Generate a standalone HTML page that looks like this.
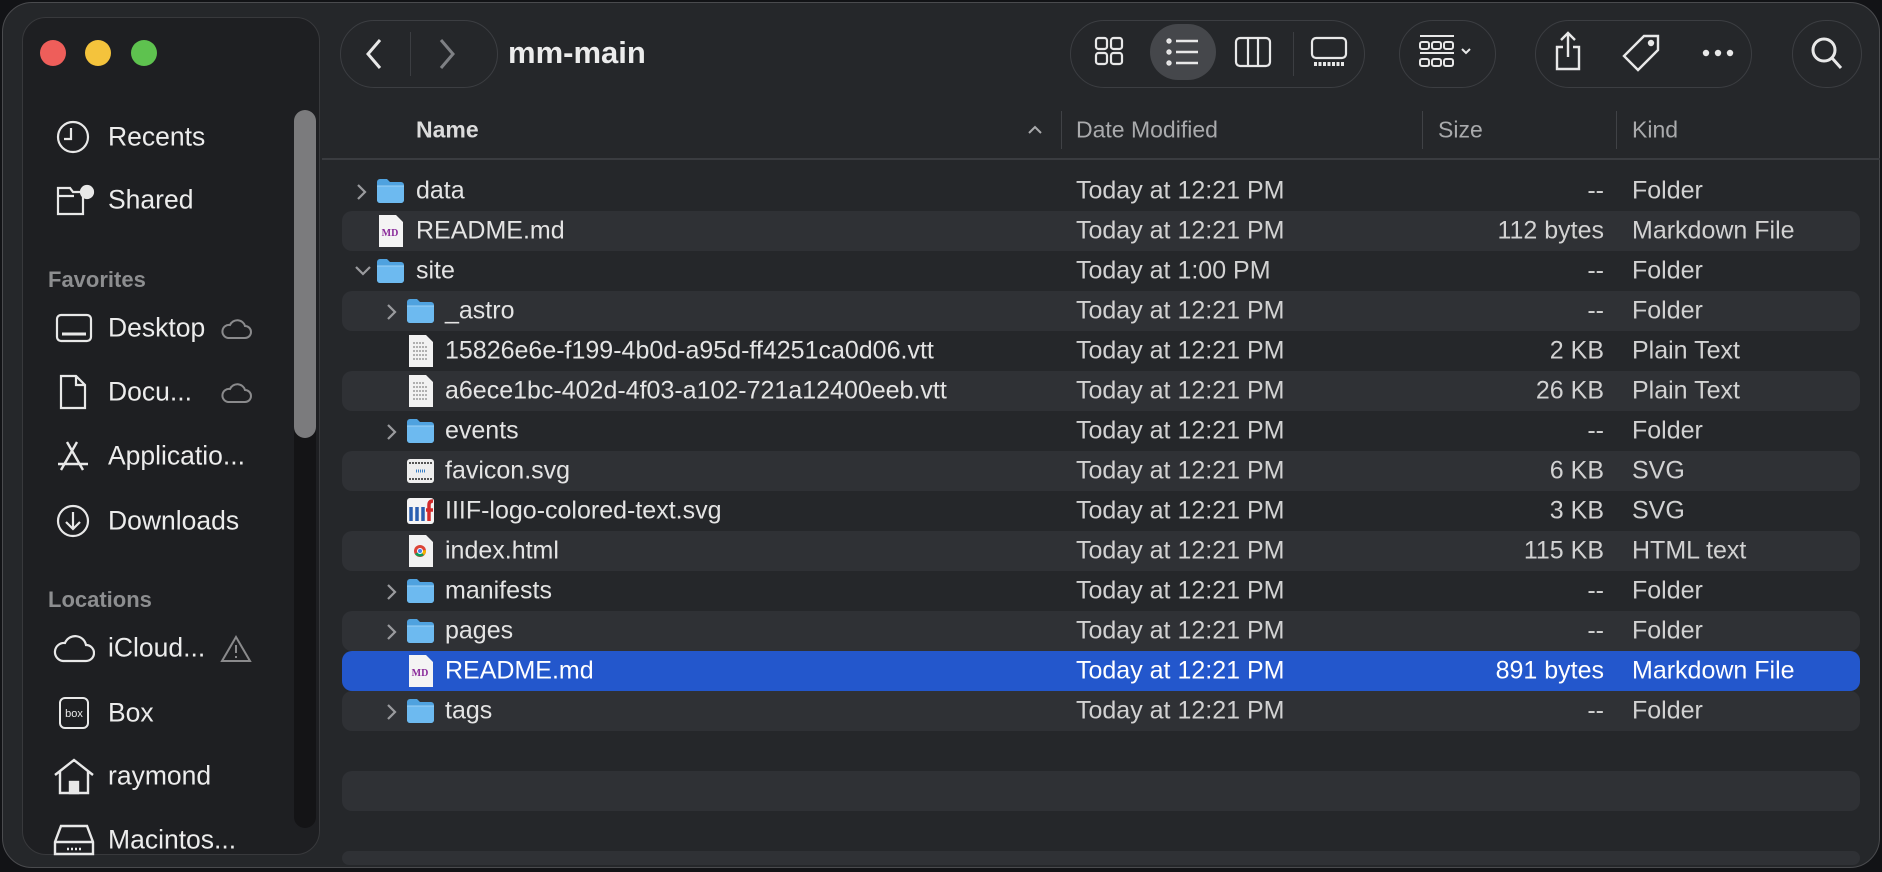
<!DOCTYPE html>
<html><head><meta charset="utf-8"><style>
*{margin:0;padding:0;box-sizing:border-box}
body{width:1882px;height:872px;background:#121316;font-family:"Liberation Sans",sans-serif;overflow:hidden;position:relative;color:#e2e2e2}
.win{position:absolute;left:2px;top:2px;width:1878px;height:866px;border-radius:30px;background:#25272a;border:1.5px solid #4a4b4e}
.side{position:absolute;left:22px;top:17px;width:298px;height:838px;border-radius:24px;background:#1e1f22;border:1px solid #38393c}
.tl{position:absolute;top:40px;width:26px;height:26px;border-radius:50%}
.abs{position:absolute}
.si{position:absolute;left:108px;font-size:26.5px;color:#ececec;transform:translateY(-50%);white-space:nowrap}
.lbl{position:absolute;left:48px;font-size:22px;font-weight:bold;color:#8d8e90;transform:translateY(-50%)}
.ico{position:absolute;left:55px;transform:translateY(-50%)}
.pill{position:absolute;border:1.5px solid #3c3e42;border-radius:34px;background:#25272a}
.hdr{position:absolute;top:130px;font-size:23px;color:#a9aaac;transform:translateY(-50%)}
.sep{position:absolute;top:111px;width:1px;height:38px;background:#404246}
.row{position:absolute;left:342px;width:1518px;height:40px;border-radius:10px}
.row.s{background:#2f3135}
.row.sel{background:#2357cc}
.t{position:absolute;top:50%;transform:translateY(-50%);font-size:25px;color:#e4e4e4;white-space:nowrap}
.d{left:734px;color:#d2d2d2}
.z{right:256px;color:#d2d2d2}
.k{left:1290px;color:#d2d2d2}
.ch{position:absolute;top:12px}
</style></head><body>
<div class="win"></div>
<div class="side"></div>
<div class="tl" style="left:40px;background:#ee5e5a"></div>
<div class="tl" style="left:85px;background:#f4c33c"></div>
<div class="tl" style="left:131px;background:#5ec24f"></div>
<div class="abs" style="left:294px;top:110px;width:22px;height:718px;border-radius:11px;background:#141416"></div>
<div class="abs" style="left:294px;top:110px;width:22px;height:328px;border-radius:11px;background:#7b7b7d"></div>

<svg class="ico" style="top:137px" width="36" height="36" viewBox="0 0 36 36" fill="none" stroke="#e8e8e8" stroke-width="2.2"><circle cx="18" cy="18" r="15"/><path d="M16 9v11h-7"/></svg>
<div class="si" style="top:137px">Recents</div>
<svg class="ico" style="top:200px" width="40" height="36" viewBox="0 0 40 36" fill="none" stroke="#e8e8e8" stroke-width="2.2"><path d="M3 6h12l3 4h10v22H3z M3 14h16"/><circle cx="32" cy="10" r="6" fill="#e8e8e8"/></svg>
<div class="si" style="top:200px">Shared</div>
<div class="lbl" style="top:280px">Favorites</div>
<svg class="ico" style="top:328px" width="38" height="32" viewBox="0 0 38 32" fill="none" stroke="#e8e8e8" stroke-width="2.2"><rect x="2" y="3" width="34" height="26" rx="4"/><path d="M7 22h24" stroke-width="3"/></svg>
<div class="si" style="top:328px">Desktop</div>
<svg class="abs" style="left:220px;top:318px" width="32" height="22" viewBox="0 0 32 22" fill="none" stroke="#8a8a8c" stroke-width="2"><path d="M8 20h17a6 6 0 0 0 0-12 8 8 0 0 0-15-1 6 6 0 0 0-2 13z"/></svg>
<svg class="ico" style="top:392px;left:58px" width="30" height="38" viewBox="0 0 30 38" fill="none" stroke="#e8e8e8" stroke-width="2.2"><path d="M3 3h15l9 9v23H3z M18 3v9h9"/></svg>
<div class="si" style="top:392px">Docu...</div>
<svg class="abs" style="left:220px;top:382px" width="32" height="22" viewBox="0 0 32 22" fill="none" stroke="#8a8a8c" stroke-width="2"><path d="M8 20h17a6 6 0 0 0 0-12 8 8 0 0 0-15-1 6 6 0 0 0-2 13z"/></svg>
<svg class="ico" style="top:456px" width="36" height="36" viewBox="0 0 36 36" fill="none" stroke="#e8e8e8" stroke-width="2.4"><path d="M12 4l16 28M22 4L6 32M3 26h30"/></svg>
<div class="si" style="top:456px">Applicatio...</div>
<svg class="ico" style="top:521px" width="36" height="36" viewBox="0 0 36 36" fill="none" stroke="#e8e8e8" stroke-width="2.2"><circle cx="18" cy="18" r="15"/><path d="M18 9v17M11 19l7 7 7-7"/></svg>
<div class="si" style="top:521px">Downloads</div>
<div class="lbl" style="top:600px">Locations</div>
<svg class="ico" style="top:648px;left:53px" width="42" height="30" viewBox="0 0 42 30" fill="none" stroke="#e8e8e8" stroke-width="2.2"><path d="M10 28h23a8 8 0 0 0 0-16 11 11 0 0 0-21-2 9 9 0 0 0-2 18z"/></svg>
<div class="si" style="top:648px">iCloud...</div>
<svg class="abs" style="left:220px;top:634px" width="32" height="30" viewBox="0 0 32 30" fill="none" stroke="#8a8a8c" stroke-width="2"><path d="M16 3L30 27H2z M16 11v8 M16 22v2"/></svg>
<svg class="ico" style="top:713px;left:58px" width="32" height="34" viewBox="0 0 32 34" fill="none" stroke="#e8e8e8" stroke-width="2"><rect x="2" y="2" width="28" height="30" rx="5"/><text x="16" y="21" font-size="11" text-anchor="middle" fill="#e8e8e8" stroke="none" font-family="Liberation Sans">box</text></svg>
<div class="si" style="top:713px">Box</div>
<svg class="ico" style="top:776px;left:53px" width="42" height="38" viewBox="0 0 42 38" fill="none" stroke="#e8e8e8" stroke-width="2.4"><path d="M2 18L21 3l19 15M7 14v22h28V14"/><rect x="17" y="25" width="8" height="11" fill="#e8e8e8"/></svg>
<div class="si" style="top:776px">raymond</div>
<svg class="ico" style="top:840px;left:53px" width="42" height="36" viewBox="0 0 42 36" fill="none" stroke="#e8e8e8" stroke-width="2.4"><path d="M8 4h26l6 16v12H2V20z M2 20h38"/><path d="M14 27h14" stroke-dasharray="2 2"/></svg>
<div class="si" style="top:840px">Macintos...</div>

<div class="pill" style="left:340px;top:20px;width:158px;height:68px"></div>
<svg class="abs" style="left:362px;top:36px" width="24" height="36" viewBox="0 0 24 36" fill="none" stroke="#e8e8e8" stroke-width="3"><path d="M18 4L6 18l12 14"/></svg>
<div class="abs" style="left:410px;top:32px;width:1px;height:44px;background:#3c3e42"></div>
<svg class="abs" style="left:435px;top:36px" width="24" height="36" viewBox="0 0 24 36" fill="none" stroke="#7e8084" stroke-width="3"><path d="M6 4l12 14L6 32"/></svg>
<div class="abs" style="left:508px;top:35px;font-size:31px;font-weight:bold;color:#ececec">mm-main</div>

<div class="pill" style="left:1070px;top:20px;width:295px;height:68px"></div>
<div class="abs" style="left:1150px;top:24px;width:66px;height:56px;border-radius:28px;background:#45474b"></div>
<svg class="abs" style="left:1094px;top:36px" width="30" height="30" viewBox="0 0 30 30" fill="none" stroke="#e8e8e8" stroke-width="2.2"><rect x="2" y="2" width="11" height="11" rx="2.5"/><rect x="17" y="2" width="11" height="11" rx="2.5"/><rect x="2" y="17" width="11" height="11" rx="2.5"/><rect x="17" y="17" width="11" height="11" rx="2.5"/></svg>
<svg class="abs" style="left:1166px;top:38px" width="34" height="28" viewBox="0 0 34 28" fill="none" stroke="#e8e8e8" stroke-width="2.4"><path d="M10 3h22M10 14h22M10 25h22"/><circle cx="3" cy="3" r="1.5"/><circle cx="3" cy="14" r="1.5"/><circle cx="3" cy="25" r="1.5"/></svg>
<svg class="abs" style="left:1234px;top:36px" width="38" height="32" viewBox="0 0 38 32" fill="none" stroke="#e8e8e8" stroke-width="2.2"><rect x="2" y="2" width="34" height="28" rx="4"/><path d="M14 2v28M24 2v28"/></svg>
<div class="abs" style="left:1293px;top:32px;width:1px;height:44px;background:#3c3e42"></div>
<svg class="abs" style="left:1310px;top:36px" width="38" height="32" viewBox="0 0 38 32" fill="none" stroke="#e8e8e8" stroke-width="2.2"><rect x="2" y="2" width="34" height="20" rx="4"/><path d="M4 28h30" stroke-width="4" stroke-dasharray="3 1.5"/></svg>

<div class="pill" style="left:1399px;top:20px;width:97px;height:68px"></div>
<svg class="abs" style="left:1418px;top:34px" width="62" height="36" viewBox="0 0 62 36" fill="none" stroke="#e8e8e8" stroke-width="2"><path d="M2 2h34M2 19h34"/><rect x="2" y="8" width="9" height="7" rx="2"/><rect x="14" y="8" width="9" height="7" rx="2"/><rect x="26" y="8" width="9" height="7" rx="2"/><rect x="2" y="25" width="9" height="7" rx="2"/><rect x="14" y="25" width="9" height="7" rx="2"/><rect x="26" y="25" width="9" height="7" rx="2"/><path d="M44 15l4 4 4-4"/></svg>

<div class="pill" style="left:1535px;top:20px;width:217px;height:68px"></div>
<svg class="abs" style="left:1553px;top:30px" width="30" height="42" viewBox="0 0 30 42" fill="none" stroke="#e8e8e8" stroke-width="2.4"><path d="M15 3v24M8 10l7-7 7 7M10 17H4v22h22V17h-6"/></svg>
<svg class="abs" style="left:1622px;top:32px" width="40" height="40" viewBox="0 0 40 40" fill="none" stroke="#e8e8e8" stroke-width="2.4"><path d="M22 4h14v14L16 38 2 24z"/><circle cx="29" cy="11" r="2" fill="#e8e8e8"/></svg>
<svg class="abs" style="left:1702px;top:48px" width="32" height="10" viewBox="0 0 32 10"><circle cx="4" cy="5" r="3.2" fill="#e8e8e8"/><circle cx="16" cy="5" r="3.2" fill="#e8e8e8"/><circle cx="28" cy="5" r="3.2" fill="#e8e8e8"/></svg>

<div class="pill" style="left:1792px;top:20px;width:70px;height:68px"></div>
<svg class="abs" style="left:1810px;top:36px" width="34" height="36" viewBox="0 0 34 36" fill="none" stroke="#e8e8e8" stroke-width="3"><circle cx="14" cy="14" r="11"/><path d="M22 22l9 10"/></svg>

<div class="hdr" style="left:416px;color:#dcdcdc;font-weight:bold">Name</div>
<svg class="abs" style="left:1027px;top:125px" width="16" height="10" viewBox="0 0 16 10" fill="none" stroke="#a9aaac" stroke-width="2"><path d="M2 8l6-6 6 6"/></svg>
<div class="sep" style="left:1061px"></div><div class="sep" style="left:1422px"></div><div class="sep" style="left:1616px"></div>
<div class="hdr" style="left:1076px">Date Modified</div>
<div class="hdr" style="left:1438px">Size</div>
<div class="hdr" style="left:1632px">Kind</div>
<div class="abs" style="left:322px;top:158px;width:1558px;height:2px;background:#3a3c40"></div>

<svg width="0" height="0" style="position:absolute"><defs>
<g id="fold"><path d="M1 5a3 3 0 0 1 3-3h7l3 3h11a3 3 0 0 1 3 3v15a3 3 0 0 1-3 3H4a3 3 0 0 1-3-3z" fill="#4fa2df"/><path d="M1 9h27v14a3 3 0 0 1-3 3H4a3 3 0 0 1-3-3z" fill="#6dbaf0"/><path d="M1 9h27" stroke="#9ad0f6" stroke-width="1"/></g>
<g id="chr"><path d="M2 2l7 7-7 7" fill="none" stroke="#9a9b9e" stroke-width="2.2"/></g>
<g id="chd"><path d="M2 2l7 7 7-7" fill="none" stroke="#9a9b9e" stroke-width="2.2"/></g>
<g id="md"><path d="M2 1h17l7 7v25H2z" fill="#f4f4f4"/><text x="13" y="22" font-size="10" font-weight="bold" text-anchor="middle" fill="#8a2a9a" font-family="Liberation Serif">MD</text></g>
<g id="txt"><path d="M2 1h17l7 7v25H2z" fill="#f2f2f2"/><path d="M6 9h12M6 13h15M6 17h15M6 21h15M6 25h15" stroke="#999" stroke-width="1.5" stroke-dasharray="2 1"/></g>
</defs></svg>

<div class="row" style="top:171px"><svg class="ch" style="left:14px" width="12" height="18"><use href="#chr"/></svg><svg class="abs" style="left:34px;top:6px" width="30" height="28"><use href="#fold"/></svg><div class="t" style="left:74px">data</div><div class="t d">Today at 12:21 PM</div><div class="t z">--</div><div class="t k">Folder</div></div>
<div class="row s" style="top:211px"><svg class="abs" style="left:35px;top:3px" width="28" height="34"><use href="#md"/></svg><div class="t" style="left:74px">README.md</div><div class="t d">Today at 12:21 PM</div><div class="t z">112 bytes</div><div class="t k">Markdown File</div></div>
<div class="row" style="top:251px"><svg class="ch" style="left:12px;top:14px" width="18" height="12"><use href="#chd"/></svg><svg class="abs" style="left:34px;top:6px" width="30" height="28"><use href="#fold"/></svg><div class="t" style="left:74px">site</div><div class="t d">Today at 1:00 PM</div><div class="t z">--</div><div class="t k">Folder</div></div>
<div class="row s" style="top:291px"><svg class="ch" style="left:44px" width="12" height="18"><use href="#chr"/></svg><svg class="abs" style="left:64px;top:6px" width="30" height="28"><use href="#fold"/></svg><div class="t" style="left:103px">_astro</div><div class="t d">Today at 12:21 PM</div><div class="t z">--</div><div class="t k">Folder</div></div>
<div class="row" style="top:331px"><svg class="abs" style="left:65px;top:3px" width="28" height="34"><use href="#txt"/></svg><div class="t" style="left:103px">15826e6e-f199-4b0d-a95d-ff4251ca0d06.vtt</div><div class="t d">Today at 12:21 PM</div><div class="t z">2 KB</div><div class="t k">Plain Text</div></div>
<div class="row s" style="top:371px"><svg class="abs" style="left:65px;top:3px" width="28" height="34"><use href="#txt"/></svg><div class="t" style="left:103px">a6ece1bc-402d-4f03-a102-721a12400eeb.vtt</div><div class="t d">Today at 12:21 PM</div><div class="t z">26 KB</div><div class="t k">Plain Text</div></div>
<div class="row" style="top:411px"><svg class="ch" style="left:44px" width="12" height="18"><use href="#chr"/></svg><svg class="abs" style="left:64px;top:6px" width="30" height="28"><use href="#fold"/></svg><div class="t" style="left:103px">events</div><div class="t d">Today at 12:21 PM</div><div class="t z">--</div><div class="t k">Folder</div></div>
<div class="row s" style="top:451px"><svg class="abs" style="left:64px;top:6px" width="30" height="28" viewBox="0 0 30 28"><rect x="1" y="2" width="27" height="24" rx="3" fill="#eee"/><path d="M3 6h23M3 22h23" stroke="#555" stroke-width="2" stroke-dasharray="2 1"/><path d="M10 14h10" stroke="#3b7fc4" stroke-width="3" stroke-dasharray="1 1"/></svg><div class="t" style="left:103px">favicon.svg</div><div class="t d">Today at 12:21 PM</div><div class="t z">6 KB</div><div class="t k">SVG</div></div>
<div class="row" style="top:491px"><svg class="abs" style="left:64px;top:6px" width="30" height="28" viewBox="0 0 30 28"><rect x="1" y="1" width="27" height="26" rx="3" fill="#f4f4f4"/><path d="M5 10v14M11 10v14M17 10v14" stroke="#2b5fb0" stroke-width="3.5"/><path d="M23 24V8q0-4 4-4M20 13h7" stroke="#d32b2b" stroke-width="3.5" fill="none"/></svg><div class="t" style="left:103px">IIIF-logo-colored-text.svg</div><div class="t d">Today at 12:21 PM</div><div class="t z">3 KB</div><div class="t k">SVG</div></div>
<div class="row s" style="top:531px"><svg class="abs" style="left:65px;top:3px" width="28" height="34" viewBox="0 0 28 34"><path d="M2 1h17l7 7v25H2z" fill="#f2f2f2"/><circle cx="13" cy="17" r="6" fill="#db4437"/><path d="M13 17L8 20a6 6 0 0 0 9 1z" fill="#0f9d58"/><path d="M13 17l6-1a6 6 0 0 1-2 5z" fill="#f4b400"/><circle cx="13" cy="17" r="2.5" fill="#4285f4" stroke="#fff"/></svg><div class="t" style="left:103px">index.html</div><div class="t d">Today at 12:21 PM</div><div class="t z">115 KB</div><div class="t k">HTML text</div></div>
<div class="row" style="top:571px"><svg class="ch" style="left:44px" width="12" height="18"><use href="#chr"/></svg><svg class="abs" style="left:64px;top:6px" width="30" height="28"><use href="#fold"/></svg><div class="t" style="left:103px">manifests</div><div class="t d">Today at 12:21 PM</div><div class="t z">--</div><div class="t k">Folder</div></div>
<div class="row s" style="top:611px"><svg class="ch" style="left:44px" width="12" height="18"><use href="#chr"/></svg><svg class="abs" style="left:64px;top:6px" width="30" height="28"><use href="#fold"/></svg><div class="t" style="left:103px">pages</div><div class="t d">Today at 12:21 PM</div><div class="t z">--</div><div class="t k">Folder</div></div>
<div class="row sel" style="top:651px"><svg class="abs" style="left:65px;top:3px" width="28" height="34"><use href="#md"/></svg><div class="t" style="left:103px;color:#fff">README.md</div><div class="t d" style="color:#fff">Today at 12:21 PM</div><div class="t z" style="color:#fff">891 bytes</div><div class="t k" style="color:#fff">Markdown File</div></div>
<div class="row s" style="top:691px"><svg class="ch" style="left:44px" width="12" height="18"><use href="#chr"/></svg><svg class="abs" style="left:64px;top:6px" width="30" height="28"><use href="#fold"/></svg><div class="t" style="left:103px">tags</div><div class="t d">Today at 12:21 PM</div><div class="t z">--</div><div class="t k">Folder</div></div>
<div class="row s" style="top:771px"></div>
<div class="row s" style="top:851px;height:14px"></div>
</body></html>
